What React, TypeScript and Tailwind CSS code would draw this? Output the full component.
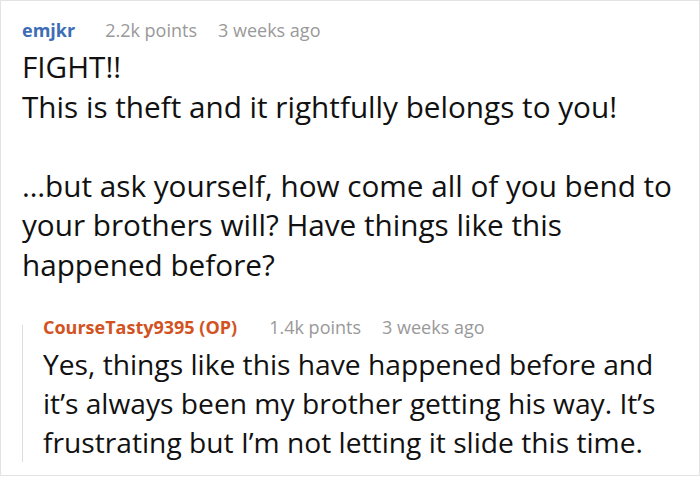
export default function App() {
  return (
    <div
      className="w-[700px] h-[476px] border border-[#e3e3e3] bg-white overflow-hidden"
      style={{ fontFamily: '"Open Sans", "Noto Sans", sans-serif' }}
    >
      <div className="pl-[21px] pr-4 pt-[16px]">
        {/* Comment header */}
        <div className="flex items-baseline text-[18px] leading-[26px]">
          <span className="font-bold text-[#3d6db5]">emjkr</span>
          <span className="ml-[30px] text-[#999]">2.2k points</span>
          <span className="ml-[21px] text-[#999]">3 weeks ago</span>
        </div>

        <div className="text-[29.7px] leading-[39.5px] text-[#111] mt-[4px]">
          <p>FIGHT!!</p>
          <p>This is theft and it rightfully belongs to you!</p>
          <p>&nbsp;</p>
          <p>…but ask yourself, how come all of you bend to your brothers will? Have things like this happened before?</p>
        </div>

        {/* Reply */}
        <div className="flex mt-[30px]">
          <div className="w-px bg-[#dcdcdc] mt-[11px] shrink-0" />
          <div className="pl-[20px] flex-1">
            <div className="flex items-baseline text-[18px] leading-[26px]">
              <span className="font-bold text-[#d2531f]">CourseTasty9395 (OP)</span>
              <span className="ml-[32px] text-[#999]">1.4k points</span>
              <span className="ml-[21px] text-[#999]">3 weeks ago</span>
            </div>
            <p className="text-[28.2px] leading-[39px] text-[#111] mt-[5px]">
              Yes, things like this have happened before and it’s always been my brother getting his way. It’s frustrating but I’m not letting it slide this time.
            </p>
          </div>
        </div>
      </div>
    </div>
  );
}
